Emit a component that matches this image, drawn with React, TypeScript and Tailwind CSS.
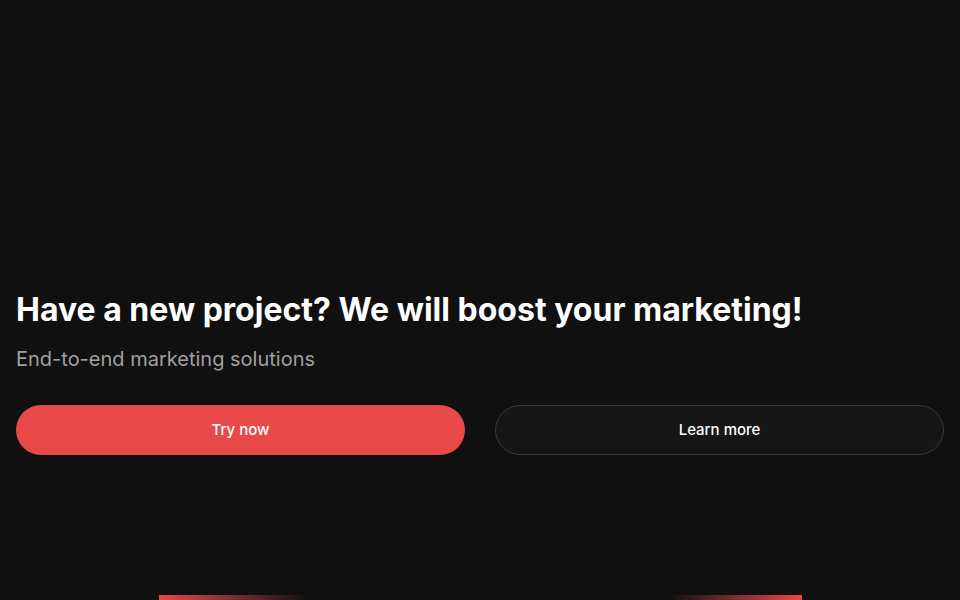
export default function App() {
    return (
        <div className="min-h-screen h-[600px] overflow-hidden bg-[#101010] font-['Inter',sans-serif] text-white">
            {/* Hero section */}
            <section className="px-4 pt-[290px]">
                <h1 className="text-[32px] leading-[40px] font-bold">
                    Have a new project? We will boost your marketing!
                </h1>
                <p className="mt-[15px] text-[20px] leading-[28px] text-[#a0a0a0]">
                    End-to-end marketing solutions
                </p>
                <div className="mt-[32px] grid grid-cols-2 gap-[30px]">
                    <button className="h-[50px] rounded-full bg-[#e84a4a] text-[15px] font-medium text-white">
                        Try now
                    </button>
                    <button className="h-[50px] rounded-full border border-[#3a3a3a] bg-[#161616] text-[15px] font-medium text-white">
                        Learn more
                    </button>
                </div>
            </section>

            {/* Cards peeking in at the bottom */}
            <div className="mt-[140px] flex h-[10px]">
                <div className="w-[159px]" />
                <div className="h-full w-[150px] bg-gradient-to-r from-[#e84a4a] to-transparent" />
                <div className="w-[360px]" />
                <div className="h-full w-[133px] bg-gradient-to-r from-transparent to-[#e84a4a]" />
            </div>
        </div>
    )
}
